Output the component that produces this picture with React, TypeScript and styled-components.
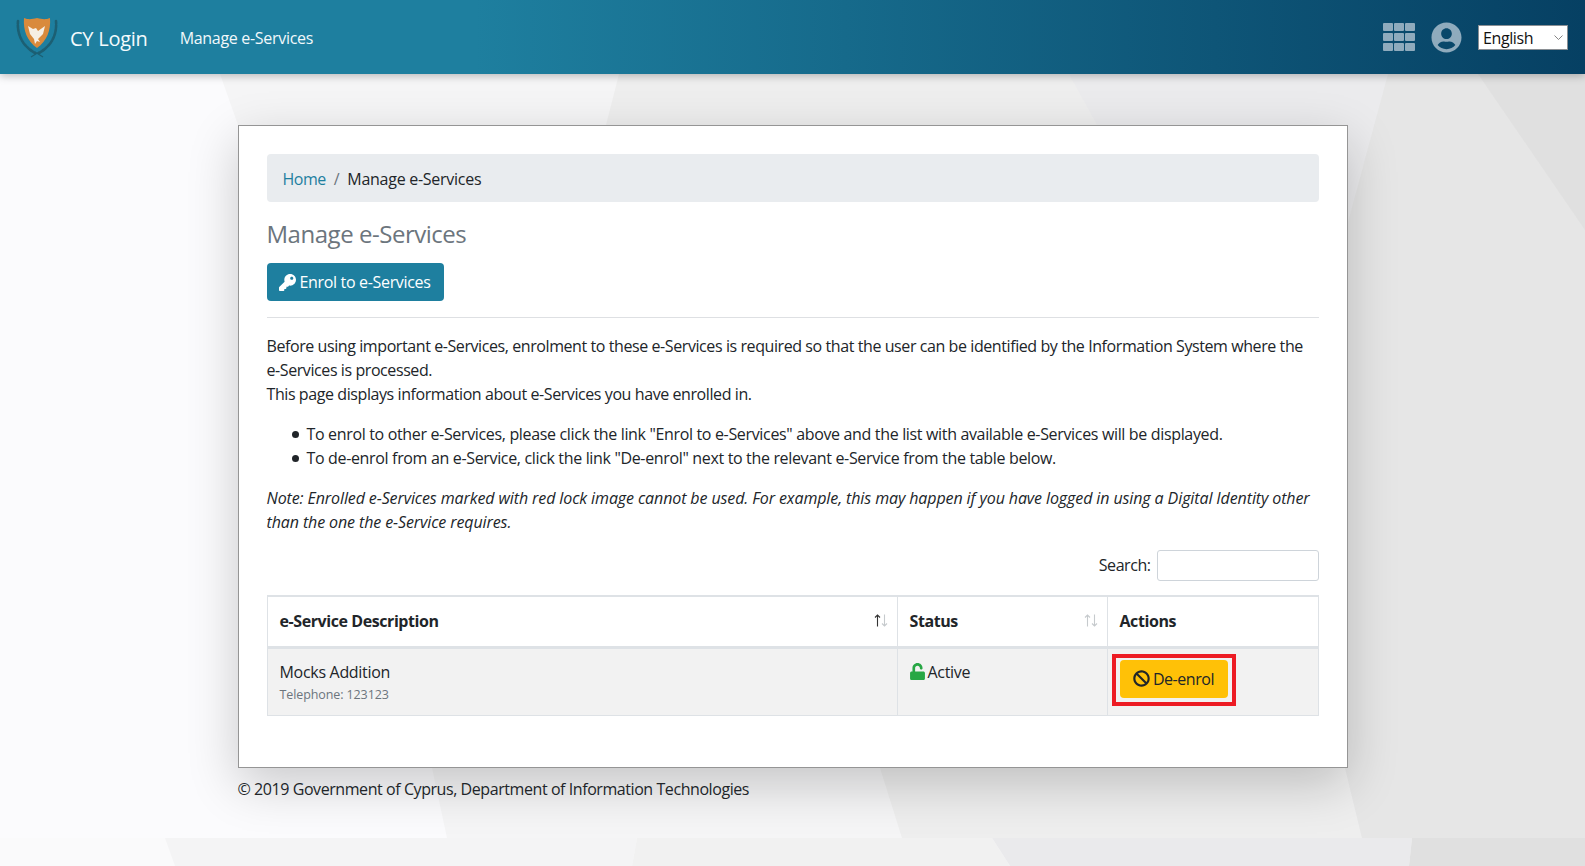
import React from 'react';
import styled, { createGlobalStyle } from 'styled-components';
import { FaKey, FaBan, FaUnlock, FaUserCircle } from 'react-icons/fa';

const Global = createGlobalStyle`
  html, body { margin: 0; padding: 0; height: 100%; }
  body {
    font-family: "Open Sans", "Noto Sans", "Liberation Sans", sans-serif;
    font-size: 16px;
    line-height: 24px;
    color: #212529;
    background: #fbfbfd;
  }
  * { box-sizing: border-box; }
`;

const Page = styled.div`
  position: relative;
  height: 866px;
  overflow: hidden;
  display: flex;
  flex-direction: column;
  isolation: isolate;
`;

const Backdrop = styled.svg`
  position: absolute;
  inset: 0;
  z-index: -1;
`;

const Header = styled.header`
  height: 74px;
  flex: none;
  display: flex;
  align-items: center;
  padding: 0 17px 0 16px;
  background: linear-gradient(90deg, #1e7f9f 0%, #1e7f9f 30%, #064063 100%);
  box-shadow: 0 2px 8px rgba(0, 0, 0, 0.25);
`;

const Brand = styled.a`
  display: flex;
  align-items: center;
  color: #f4fbfd;
  font-size: 20px;
  letter-spacing: -0.25px;
`;

const BrandName = styled.span`
  margin-left: 12px;
  margin-top: 3px;
`;

const NavLink = styled.a`
  margin-left: 32px;
  margin-top: 2px;
  color: #f1f8fb;
  font-size: 16px;
  letter-spacing: -0.3px;
`;

const HeaderRight = styled.div`
  margin-left: auto;
  display: flex;
  align-items: center;
  color: #8fabbd;
`;

const AppsGrid = styled.div`
  display: grid;
  grid-template-columns: repeat(3, 10px);
  grid-auto-rows: 8px;
  column-gap: 1px;
  row-gap: 2px;
`;

const AppsCell = styled.span`
  background: #8fabbd;
  border-radius: 1px;
`;

const UserIcon = styled(FaUserCircle)`
  margin-left: 16px;
  font-size: 31px;
`;

const LangSelect = styled.div`
  margin-left: 16px;
  margin-top: 1px;
  width: 90px;
  height: 25px;
  background: #fff;
  border: 1px solid #8a8f94;
  color: #111;
  display: flex;
  align-items: center;
  justify-content: space-between;
  padding: 0 4px;
  font-size: 16px;
  letter-spacing: -0.4px;
`;

const Main = styled.main`
  width: 1110px;
  margin: 51px auto 0;
`;

const Card = styled.section`
  height: 643px;
  background: #fff;
  border: 1px solid #959595;
  padding: 28px;
  box-shadow: 0 16px 48px rgba(0, 0, 0, 0.2);
`;

const Breadcrumb = styled.nav`
  height: 48px;
  background: #e9ecef;
  border-radius: 4px;
  padding: 13px 16px 11px;
  display: flex;
  margin-bottom: 17px;
  letter-spacing: -0.27px;
`;

const Crumb = styled.a`
  color: #1e7f9f;
  letter-spacing: -0.5px;
`;

const CrumbSep = styled.span`
  color: #6c757d;
  padding: 0 8px;
`;

const Title = styled.h1`
  margin: 0 0 14px;
  font-size: 24px;
  line-height: 30px;
  font-weight: 400;
  color: #6c757d;
  letter-spacing: -0.47px;
`;

const PrimaryButton = styled.a`
  display: inline-flex;
  align-items: center;
  height: 38px;
  padding: 0 13px 0 12px;
  gap: 4px;
  background: #1e7f9f;
  color: #fff;
  border-radius: 4px;
  letter-spacing: -0.33px;
`;

const Divider = styled.hr`
  margin: 16px 0 16px;
  border: 0;
  border-top: 1px solid #dee0e3;
`;

const Para = styled.p`
  margin: 0 0 16px;
  letter-spacing: -0.415px;
`;

const List = styled.ul`
  margin: 0 0 16px;
  padding-left: 40px;
  list-style: none;
  letter-spacing: -0.34px;
`;

const ListItem = styled.li`
  position: relative;
  &::before {
    content: '';
    position: absolute;
    left: -15px;
    top: 9px;
    width: 7px;
    height: 7px;
    border-radius: 50%;
    background: #212529;
  }
`;

const Note = styled.p`
  margin: 0 0 15px;
  font-style: italic;
  letter-spacing: -0.105px;
`;

const SearchRow = styled.div`
  display: flex;
  justify-content: flex-end;
  align-items: center;
  height: 31px;
  gap: 6px;
  margin-bottom: 15px;
  letter-spacing: -0.45px;
`;

const SearchInput = styled.div`
  width: 162px;
  height: 31px;
  margin-top: 2px;
  border: 1px solid #ced4da;
  border-radius: 3px;
  background: #fff;
`;

const Table = styled.table`
  width: 100%;
  table-layout: fixed;
  border-collapse: collapse;
  letter-spacing: -0.3px;
`;

const Th = styled.th<{ $w?: number }>`
  position: relative;
  width: ${p => (p.$w ? p.$w + 'px' : 'auto')};
  height: 51px;
  padding: 0 12px;
  text-align: left;
  font-weight: 700;
  border: 1px solid #dee2e6;
  border-top-width: 2px;
  border-bottom-width: 3px;
  letter-spacing: -0.42px;
`;

const SortIcon = styled.svg`
  position: absolute;
  right: 9px;
  top: 17px;
`;

const Tr = styled.tr`
  background: #f2f2f2;
`;

const Td = styled.td`
  height: 68px;
  padding: 11px 12px 0;
  vertical-align: top;
  border: 1px solid #dee2e6;
`;

const ServiceNote = styled.small`
  display: block;
  font-size: 12.5px;
  line-height: 20px;
  margin-top: 1px;
  color: #6c757d;
  letter-spacing: -0.1px;
`;

const StatusIcon = styled(FaUnlock)`
  color: #28a745;
  font-size: 17px;
  margin: 0 2px 0 -1px;
  vertical-align: -2px;
`;

const Highlight = styled.div`
  position: absolute;
  left: -8px;
  top: -6px;
  width: 124px;
  height: 52px;
  border: 4px solid #ed1c24;
`;

const ActionWrap = styled.div`
  position: relative;
  width: 108px;
  height: 38px;
`;

const WarnButton = styled.a`
  display: flex;
  align-items: center;
  justify-content: center;
  gap: 3px;
  width: 108px;
  height: 38px;
  background: #ffc107;
  border-radius: 4px;
  color: #212529;
  letter-spacing: -0.45px;
`;

const Footer = styled.footer`
  margin-top: 9px;
  letter-spacing: -0.43px;
`;

const Logo = () => (
  <svg width="42" height="42" viewBox="0 0 42 42">
    <g fill="none" stroke="#1c5f73" strokeWidth="2.6" strokeLinecap="round" strokeDasharray="3 1">
      <path d="M2 5c-1 12 3 24 17 32" />
      <path d="M40 5c1 12-3 24-17 32" />
    </g>
    <path d="M15 41l8-5M27 41l-8-5" fill="none" stroke="#1c5f73" strokeWidth="1.2" />
    <path d="M8 2c5 2 8 1 13 0 5 1 8 2 13 0 1 12-3 23-13 30C11 25 7 14 8 2z" fill="#d98a3c" />
    <path d="M12 10l5 3 3-1 2 3 7-5-2 8-5 5 2 3-3-1-2 3-1-5-4-5z" fill="#f6efe4" />
  </svg>
);

const Sort = ({ active }: { active?: boolean }) => (
  <SortIcon width="14" height="13" viewBox="0 0 14 13" aria-hidden="true">
    <path d="M3.5 12.5V1M1 3.5L3.5 1 6 3.5" fill="none" stroke={active ? '#333' : '#c6cacd'} strokeWidth="1.1" />
    <path d="M10.5 .5V12M8 9.5l2.5 2.5L13 9.5" fill="none" stroke="#c6cacd" strokeWidth="1.1" />
  </SortIcon>
);

export default function App() {
  return (
    <Page>
      <Global />
      <Backdrop width="1585" height="866" viewBox="0 0 1585 866" aria-hidden="true">
        <rect width="1585" height="866" fill="#fbfbfd" />
        <polygon points="220,74 1585,74 1585,838 447,838 432,768 238,125" fill="#f5f5f6" />
        <polygon points="619,74 1585,74 1585,838 902,838 880,768 606,125" fill="#eeeeee" />
        <polygon points="1069,74 1585,74 1585,838 1362,838 1345,768 1097,125" fill="#ebebed" />
        <polygon points="1388,74 1585,74 1585,838 1362,838 1345,768 1348,222" fill="#e6e6e6" />
        <polygon points="1478,74 1585,74 1585,230" fill="#e0e0e0" />
        <rect y="838" width="1585" height="28" fill="#fafafb" />
        <polygon points="165,838 637,838 632,866 175,866" fill="#f4f4f5" />
        <polygon points="637,838 992,838 1010,866 632,866" fill="#f1f1f1" />
        <polygon points="992,838 1412,838 1409,866 1010,866" fill="#eaeaec" />
        <polygon points="1412,838 1585,838 1585,866 1409,866" fill="#e0e0e0" />
      </Backdrop>
      <Header>
        <Brand><Logo /><BrandName>CY Login</BrandName></Brand>
        <NavLink>Manage e-Services</NavLink>
        <HeaderRight>
          <AppsGrid>
            {Array.from({ length: 9 }).map((_, i) => <AppsCell key={i} />)}
          </AppsGrid>
          <UserIcon />
          <LangSelect>
            English
            <svg width="9" height="5" viewBox="0 0 9 5"><path d="M.5.5l4 4 4-4" fill="none" stroke="#777" strokeWidth=".9" /></svg>
          </LangSelect>
        </HeaderRight>
      </Header>
      <Main>
        <Card>
          <Breadcrumb>
            <Crumb>Home</Crumb><CrumbSep>/</CrumbSep><span>Manage e-Services</span>
          </Breadcrumb>
          <Title>Manage e-Services</Title>
          <PrimaryButton><FaKey size={17} />Enrol to e-Services</PrimaryButton>
          <Divider />
          <Para>
            Before using important e-Services, enrolment to these e-Services is required so that the user can be identified by the Information System where the e&#8209;Services is processed.<br />
            This page displays information about e-Services you have enrolled in.
          </Para>
          <List>
            <ListItem>To enrol to other e-Services, please click the link "Enrol to e-Services" above and the list with available e-Services will be displayed.</ListItem>
            <ListItem>To de-enrol from an e-Service, click the link "De-enrol" next to the relevant e-Service from the table below.</ListItem>
          </List>
          <Note>Note: Enrolled e-Services marked with red lock image cannot be used. For example, this may happen if you have logged in using a Digital Identity other than the one the e-Service requires.</Note>
          <SearchRow>Search:<SearchInput /></SearchRow>
          <Table>
            <thead>
              <tr>
                <Th $w={630}>e-Service Description<Sort active /></Th>
                <Th $w={210}>Status<Sort /></Th>
                <Th>Actions</Th>
              </tr>
            </thead>
            <tbody>
              <Tr>
                <Td>Mocks Addition<ServiceNote>Telephone: 123123</ServiceNote></Td>
                <Td><StatusIcon />Active</Td>
                <Td>
                  <ActionWrap>
                    <Highlight />
                    <WarnButton><FaBan size={17} />De-enrol</WarnButton>
                  </ActionWrap>
                </Td>
              </Tr>
            </tbody>
          </Table>
        </Card>
        <Footer>© 2019 Government of Cyprus, Department of Information Technologies</Footer>
      </Main>
    </Page>
  );
}
